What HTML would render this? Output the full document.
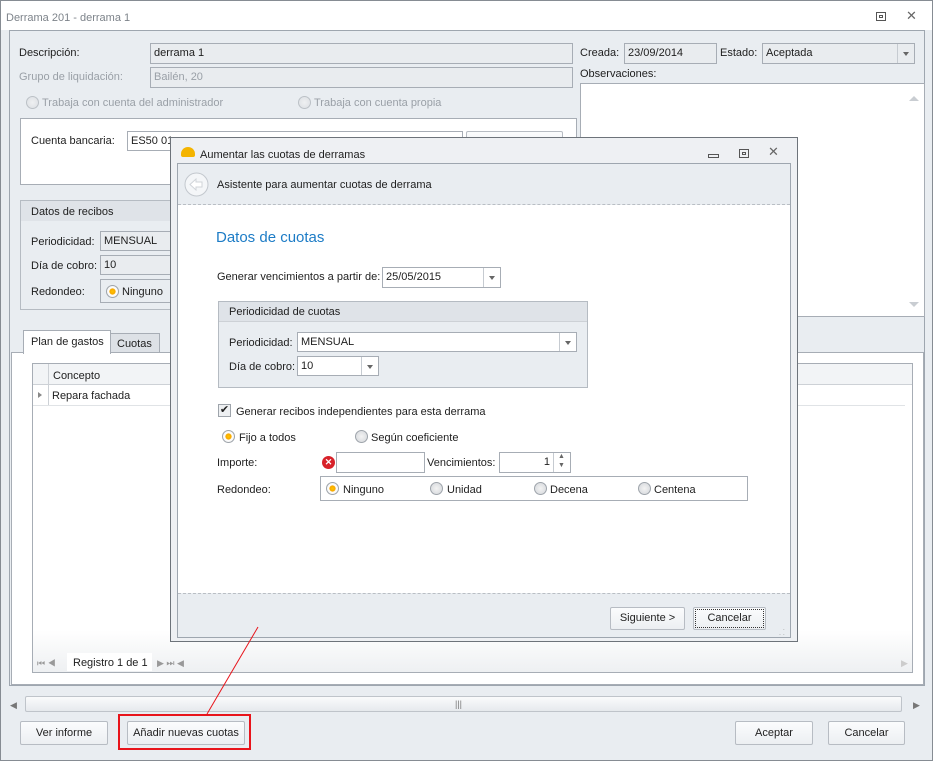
<!DOCTYPE html>
<html><head><meta charset="utf-8">
<style>
*{box-sizing:border-box;margin:0;padding:0}
body{width:933px;height:761px;position:relative;overflow:hidden;background:#fff;font:11px "Liberation Sans",sans-serif;color:#1e1e1e}
.a{position:absolute}
.t{position:absolute;white-space:nowrap;line-height:14px}
.inp{position:absolute;border:1px solid #a7adb5;background:#fff;padding:2px 3px;line-height:14px;white-space:nowrap;overflow:hidden}
.ro{background:#e9ecef}
.dd{position:absolute;right:0;top:0;bottom:0;width:17px;border-left:1px solid #c6cbd1;background:#fff}
.dd:after{content:"";position:absolute;left:5px;top:8px;border:3.5px solid transparent;border-top:4px solid #666}
.btn{position:absolute;border:1px solid #b7bcc3;border-radius:2px;background:linear-gradient(#fbfcfd,#eceff2);text-align:center;line-height:20px;color:#222}
.rad{position:absolute;width:13px;height:13px;border-radius:50%;border:1px solid #9ea4ab;background:radial-gradient(#f3f3f3,#d3d6da)}
.rad.on{background:radial-gradient(#ffc400 0,#f7a800 35%,#fff 45%,#e9e9e9)}
.gray{color:#9aa0a7}
</style></head><body>
<div class="a" style="left:0;top:0;width:933px;height:761px;border:1px solid #868c93;background:#e9edf1"></div>
<div class="a" style="left:1px;top:1px;width:931px;height:29px;background:#fff"></div>
<div class="t" style="left:6px;top:11px;color:#7d838a">Derrama 201 - derrama 1</div>
<div class="a" style="left:876px;top:12px;width:10px;height:9px;border:1px solid #555"><div class="a" style="left:2px;top:2px;width:4px;height:3px;border:1px solid #555"></div></div>
<div class="t" style="left:906px;top:9px;font-size:13px;color:#666">✕</div>
<div class="a" style="left:9px;top:30px;width:916px;height:656px;border:1px solid #9ea6af;background:#e9edf1"></div>

<div class="t" style="left:19px;top:46px">Descripción:</div>
<div class="inp ro" style="left:150px;top:43px;width:423px;height:21px">derrama 1</div>
<div class="t gray" style="left:19px;top:70px">Grupo de liquidación:</div>
<div class="inp ro gray" style="left:150px;top:67px;width:423px;height:21px">Bailén, 20</div>
<div class="rad" style="left:26px;top:96px;opacity:.6"></div><div class="t gray" style="left:42px;top:96px">Trabaja con cuenta del administrador</div>
<div class="rad" style="left:298px;top:96px;opacity:.6"></div><div class="t gray" style="left:314px;top:96px">Trabaja con cuenta propia</div>
<div class="a" style="left:20px;top:118px;width:557px;height:67px;border:1px solid #a7adb5;background:#fff"></div>
<div class="t" style="left:31px;top:134px">Cuenta bancaria:</div>
<div class="inp" style="left:127px;top:131px;width:336px;height:20px">ES50 01</div>
<div class="btn" style="left:466px;top:131px;width:97px;height:20px"></div>

<div class="t" style="left:580px;top:46px">Creada:</div>
<div class="inp ro" style="left:624px;top:43px;width:93px;height:21px">23/09/2014</div>
<div class="t" style="left:720px;top:46px">Estado:</div>
<div class="inp ro" style="left:762px;top:43px;width:153px;height:21px">Aceptada<div class="dd" style="background:#e9ecef"></div></div>
<div class="t" style="left:580px;top:67px">Observaciones:</div>
<div class="a" style="left:580px;top:83px;width:345px;height:234px;border:1px solid #a7adb5;background:#fff"></div>
<div class="a" style="left:909px;top:91px;border:5px solid transparent;border-bottom:5px solid #c9cdd2"></div>
<div class="a" style="left:909px;top:302px;border:5px solid transparent;border-top:5px solid #c9cdd2"></div>

<div class="a" style="left:20px;top:200px;width:160px;height:110px;border:1px solid #b5bbc2"></div>
<div class="a" style="left:21px;top:201px;width:159px;height:20px;background:#dfe3e8"></div>
<div class="t" style="left:31px;top:205px">Datos de recibos</div>
<div class="t" style="left:31px;top:235px">Periodicidad:</div>
<div class="inp ro" style="left:100px;top:231px;width:80px;height:20px">MENSUAL</div>
<div class="t" style="left:31px;top:259px">Día de cobro:</div>
<div class="inp ro" style="left:100px;top:255px;width:80px;height:20px">10</div>
<div class="t" style="left:31px;top:285px">Redondeo:</div>
<div class="a" style="left:100px;top:279px;width:80px;height:24px;border:1px solid #a7adb5"></div>
<div class="rad on" style="left:106px;top:285px"></div><div class="t" style="left:122px;top:285px">Ninguno</div>

<div class="a" style="left:11px;top:352px;width:913px;height:333px;border:1px solid #a7adb5;background:#fff"></div>
<div class="a" style="left:23px;top:330px;width:88px;height:24px;border:1px solid #a7adb5;border-bottom:none;background:#fff"></div>
<div class="t" style="left:31px;top:335px">Plan de gastos</div>
<div class="a" style="left:110px;top:333px;width:50px;height:20px;border:1px solid #a7adb5;background:#dde1e6"></div>
<div class="t" style="left:117px;top:337px">Cuotas</div>
<div class="a" style="left:32px;top:363px;width:881px;height:310px;border:1px solid #a7adb5;background:#fff"></div>
<div class="a" style="left:33px;top:364px;width:879px;height:21px;background:#f2f4f6;border-bottom:1px solid #cdd1d6"></div>
<div class="a" style="left:48px;top:364px;width:1px;height:42px;background:#cdd1d6"></div>
<div class="t" style="left:53px;top:369px">Concepto</div>
<div class="a" style="left:33px;top:405px;width:872px;height:1px;background:#e0e3e6"></div>
<div class="a" style="left:38px;top:392px;border:3px solid transparent;border-left:4px solid #888"></div>
<div class="t" style="left:52px;top:389px">Repara fachada</div>
<div class="a" style="left:33px;top:630px;width:879px;height:42px;background:linear-gradient(#fff,#eef0f2)"></div>
<div class="t" style="left:37px;top:656px;font-size:9px;color:#999">⏮ ◀</div>
<div class="a" style="left:67px;top:653px;width:85px;height:18px;background:#fff"></div>
<div class="t" style="left:73px;top:656px">Registro 1 de 1</div>
<div class="t" style="left:157px;top:656px;font-size:9px;color:#999">▶ ⏭ ◀</div>
<div class="t" style="left:901px;top:656px;font-size:9px;color:#ccc">▶</div>

<div class="a" style="left:25px;top:696px;width:877px;height:16px;border:1px solid #bfc4ca;border-radius:2px;background:linear-gradient(#fafbfc,#e6e9ed)"></div>
<div class="t" style="left:455px;top:697px;font-size:9px;color:#777">|||</div>
<div class="t" style="left:10px;top:698px;font-size:9px;color:#777">◀</div>
<div class="t" style="left:913px;top:698px;font-size:9px;color:#777">▶</div>

<div class="btn" style="left:20px;top:721px;width:88px;height:24px;line-height:22px">Ver informe</div>
<div class="a" style="left:118px;top:714px;width:133px;height:36px;border:2px solid #e8141b"></div>
<div class="btn" style="left:127px;top:721px;width:118px;height:24px;line-height:22px">Añadir nuevas cuotas</div>
<div class="btn" style="left:735px;top:721px;width:78px;height:24px;line-height:22px">Aceptar</div>
<div class="btn" style="left:828px;top:721px;width:77px;height:24px;line-height:22px">Cancelar</div>

<!-- dialog -->
<div class="a" style="left:170px;top:137px;width:628px;height:505px;border:1px solid #6d737a;background:#eef0f3"></div>
<div class="a" style="left:181px;top:147px;width:14px;height:10px;border-radius:7px 7px 2px 2px;background:#f4b400"></div>
<div class="t" style="left:200px;top:148px">Aumentar las cuotas de derramas</div>
<div class="a" style="left:708px;top:154px;width:11px;height:4px;border:1px solid #555"></div>
<div class="a" style="left:739px;top:149px;width:10px;height:9px;border:1px solid #555"><div class="a" style="left:2px;top:2px;width:4px;height:3px;border:1px solid #555"></div></div>
<div class="t" style="left:768px;top:145px;font-size:13px;color:#666">✕</div>
<div class="a" style="left:177px;top:163px;width:614px;height:475px;border:1px solid #9ea6af;background:#fff"></div>
<div class="a" style="left:178px;top:164px;width:612px;height:41px;background:#e9edf1;border-bottom:1px dashed #b9bec4"></div>
<svg class="a" style="left:184px;top:172px" width="25" height="25"><circle cx="12.5" cy="12.5" r="11.5" fill="#f4f6f8" stroke="#c3c8ce"/><path d="M6 12.5 L12 7 L12 10 L18 10 L18 15 L12 15 L12 18 Z" fill="#fff" stroke="#d0d4d9"/></svg>
<div class="t" style="left:217px;top:178px">Asistente para aumentar cuotas de derrama</div>
<div class="t" style="left:216px;top:229px;font-size:15px;line-height:17px;color:#1d7cc6">Datos de cuotas</div>
<div class="t" style="left:217px;top:270px">Generar vencimientos a partir de:</div>
<div class="inp" style="left:382px;top:267px;width:119px;height:21px">25/05/2015<div class="dd"></div></div>
<div class="a" style="left:218px;top:301px;width:370px;height:87px;border:1px solid #b5bbc2;background:#e9edf1"></div>
<div class="a" style="left:219px;top:302px;width:368px;height:20px;background:#dfe3e8;border-bottom:1px solid #cdd1d6"></div>
<div class="t" style="left:229px;top:305px">Periodicidad de cuotas</div>
<div class="t" style="left:229px;top:336px">Periodicidad:</div>
<div class="inp" style="left:297px;top:332px;width:280px;height:20px">MENSUAL<div class="dd"></div></div>
<div class="t" style="left:229px;top:360px">Día de cobro:</div>
<div class="inp" style="left:297px;top:356px;width:82px;height:20px">10<div class="dd"></div></div>
<div class="a" style="left:218px;top:404px;width:13px;height:13px;border:1px solid #9ea4ab;background:#eef0f2;font-size:11px;line-height:11px;text-align:center">✔</div>
<div class="t" style="left:236px;top:405px">Generar recibos independientes para esta derrama</div>
<div class="rad on" style="left:222px;top:430px"></div><div class="t" style="left:239px;top:431px">Fijo a todos</div>
<div class="rad" style="left:355px;top:430px"></div><div class="t" style="left:371px;top:431px">Según coeficiente</div>
<div class="t" style="left:217px;top:456px">Importe:</div>
<div class="a" style="left:322px;top:456px;width:13px;height:13px;border-radius:50%;background:#d8222a;color:#fff;font-size:9px;line-height:13px;text-align:center;font-weight:bold">✕</div>
<div class="inp" style="left:336px;top:452px;width:89px;height:21px"></div>
<div class="t" style="left:427px;top:456px">Vencimientos:</div>
<div class="inp" style="left:499px;top:452px;width:72px;height:21px;text-align:right;padding-right:20px">1</div>
<div class="a" style="left:553px;top:453px;width:1px;height:19px;background:#c6cbd1"></div>
<div class="t" style="left:558px;top:452px;font-size:7px;color:#666;line-height:9px">▲<br>▼</div>
<div class="t" style="left:217px;top:483px">Redondeo:</div>
<div class="a" style="left:320px;top:476px;width:428px;height:25px;border:1px solid #a7adb5"></div>
<div class="rad on" style="left:326px;top:482px"></div><div class="t" style="left:343px;top:483px">Ninguno</div>
<div class="rad" style="left:430px;top:482px"></div><div class="t" style="left:447px;top:483px">Unidad</div>
<div class="rad" style="left:534px;top:482px"></div><div class="t" style="left:550px;top:483px">Decena</div>
<div class="rad" style="left:638px;top:482px"></div><div class="t" style="left:654px;top:483px">Centena</div>
<div class="a" style="left:178px;top:593px;width:612px;height:44px;background:#e9edf1;border-top:1px dashed #b9bec4"></div>
<div class="btn" style="left:610px;top:607px;width:75px;height:23px">Siguiente &gt;</div>
<div class="btn" style="left:693px;top:607px;width:73px;height:23px;outline:1px dotted #333;outline-offset:-3px">Cancelar</div>
<div class="t" style="left:779px;top:626px;font-size:7px;color:#999;line-height:5px">&nbsp;&nbsp;.<br>. .</div>

<svg class="a" style="left:0;top:0" width="933" height="761"><line x1="258" y1="627" x2="207" y2="714" stroke="#e8141b" stroke-width="1"/></svg>
</body></html>
